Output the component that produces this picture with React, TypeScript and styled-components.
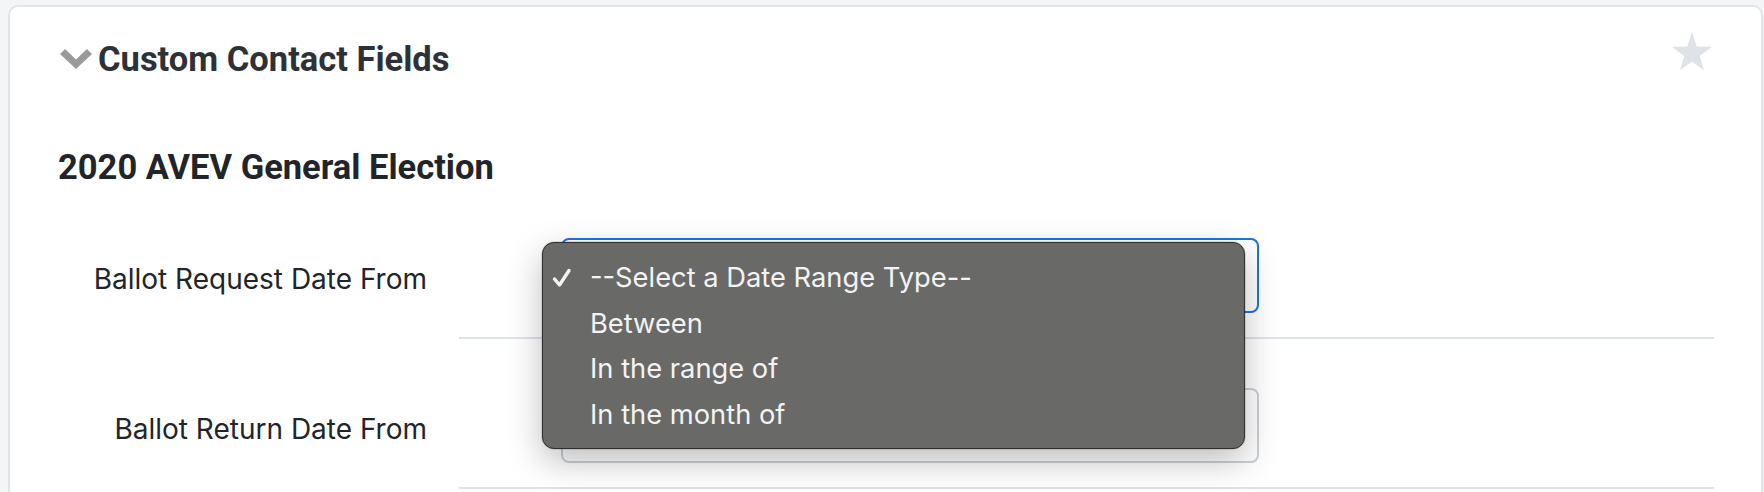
import React from "react";
import styled, { createGlobalStyle } from "styled-components";

const Global = createGlobalStyle`
  html, body { margin: 0; padding: 0; }
  body { background: #f4f5f7; }
`;

const Page = styled.div`
  height: 492px;
  overflow: hidden;
  padding: 5px 1px 0 8px;
  box-sizing: border-box;
  background: #f4f5f7;
`;

const Card = styled.section`
  background: #fff;
  border: 2px solid #e2e4e8;
  border-bottom: none;
  border-radius: 10px 10px 0 0;
  min-height: 520px;
  box-sizing: border-box;
`;

const Header = styled.header`
  display: flex;
  justify-content: space-between;
  align-items: flex-start;
  padding: 25px 49px 0 50px;
`;

const TitleGroup = styled.div`
  display: flex;
  align-items: center;
  gap: 6px;
  margin-top: 7px;
  height: 40px;
`;

const Title = styled.h2`
  margin: 0;
  font-family: Roboto, "Liberation Sans", sans-serif;
  font-weight: 700;
  font-size: 34.5px;
  line-height: 40px;
  color: #2d3238;
`;

const SectionHeading = styled.h3`
  margin: 68px 0 0 48px;
  font-family: Roboto, "Liberation Sans", sans-serif;
  font-weight: 700;
  font-size: 34.5px;
  line-height: 40px;
  color: #212529;
`;

const Rows = styled.div`
  margin-top: 2px;
`;

const Row = styled.div`
  display: grid;
  grid-template-columns: 417px 1255px;
  column-gap: 32px;
`;

const Label = styled.label`
  align-self: start;
  margin-top: 52px;
  height: 75px;
  display: flex;
  align-items: center;
  justify-content: flex-end;
  font-family: Inter, "Open Sans", sans-serif;
  font-size: 28px;
  color: #212529;
`;

const Field = styled.div`
  padding: 49px 0 24px 102px;
  border-bottom: 2px solid #dfe2e6;
`;

const SelectBox = styled.div<{ $focused?: boolean }>`
  position: relative;
  width: 698px;
  height: 75px;
  box-sizing: border-box;
  border: 2px solid ${(p) => (p.$focused ? "#1b74e4" : "#cbd0d6")};
  border-radius: 8px;
`;

const Popup = styled.ul`
  position: absolute;
  left: -21px;
  top: 2px;
  width: 703px;
  height: 207px;
  box-sizing: border-box;
  margin: 0;
  padding: 12px 0 0 9px;
  list-style: none;
  background: #696968;
  border: 1px solid #2f2f2f;
  border-radius: 12px;
  box-shadow: 0 12px 34px rgba(0, 0, 0, 0.26), 0 0 0 0.5px rgba(0, 0, 0, 0.2);
  z-index: 2;
`;

const Item = styled.li`
  display: flex;
  align-items: center;
  height: 45.5px;
  font-family: Inter, "Open Sans", sans-serif;
  font-size: 27.3px;
  color: #f3f3f3;
`;

const CheckCell = styled.span`
  width: 38px;
  display: flex;
  align-items: center;
`;

const options = [
  "--Select a Date Range Type--",
  "Between",
  "In the range of",
  "In the month of",
];

const Chevron = () => (
  <svg width="32" height="20" viewBox="0 0 32 20" aria-hidden>
    <path d="M0 5 L5 0 L16 10.5 L27 0 L32 5 L16 20 Z" fill="#9a9a9a" />
  </svg>
);

const Star = () => (
  <svg width="40" height="41" viewBox="0 0 40 41" aria-hidden>
    <polygon
      points="20,0 24.7,14.5 40,14.8 27.7,23.9 32.1,38.5 20,29.6 7.9,38.5 12.3,23.9 0,14.8 15.3,14.5"
      fill="#dfe2e6"
    />
  </svg>
);

const CheckMark = () => (
  <svg width="20" height="20" viewBox="0 0 20 20" aria-hidden>
    <path
      d="M2.5 11 L7.5 17 L17 2.5"
      fill="none"
      stroke="#f3f3f3"
      strokeWidth="3.4"
      strokeLinecap="round"
      strokeLinejoin="round"
    />
  </svg>
);

export default function App() {
  return (
    <Page>
      <Global />
      <Card>
        <Header>
          <TitleGroup>
            <Chevron />
            <Title>Custom Contact Fields</Title>
          </TitleGroup>
          <Star />
        </Header>
        <SectionHeading>2020 AVEV General Election</SectionHeading>
        <Rows>
          <Row>
            <Label>Ballot Request Date From</Label>
            <Field>
              <SelectBox $focused>
                <Popup>
                  {options.map((o, i) => (
                    <Item key={o}>
                      <CheckCell>{i === 0 ? <CheckMark /> : null}</CheckCell>
                      {o}
                    </Item>
                  ))}
                </Popup>
              </SelectBox>
            </Field>
          </Row>
          <Row>
            <Label>Ballot Return Date From</Label>
            <Field>
              <SelectBox />
            </Field>
          </Row>
        </Rows>
      </Card>
    </Page>
  );
}
